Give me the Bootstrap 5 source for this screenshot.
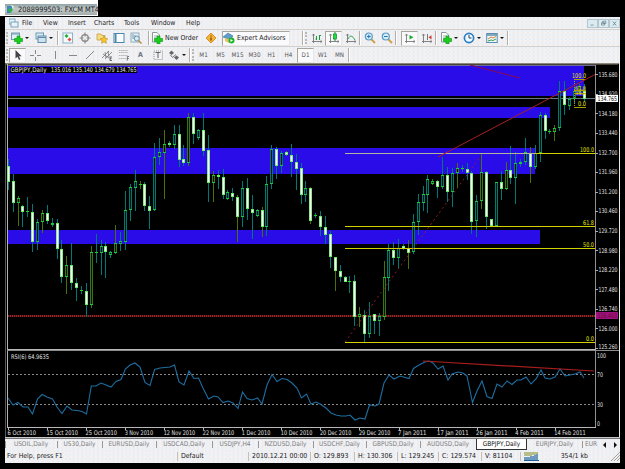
<!DOCTYPE html>
<html lang="en">
<head>
  <meta charset="UTF-8" />
  <meta name="viewport" content="width=device-width, initial-scale=1" />
  <title>2088999503: FXCM MT4</title>
  <link href="https://cdn.jsdelivr.net/npm/bootstrap@5.3.3/dist/css/bootstrap.min.css" rel="stylesheet" />
  <style>
    body {
      background: #000;
      font-family: "DejaVu Sans Condensed", "DejaVu Sans", sans-serif;
      font-size: 6.9px;
      line-height: 1;
      color: #1c1c1c;
      width: 625px;
      height: 469px;
    }
    .title-wrap { width: 98px; height: 16px; background: #fff; padding: 4px 1px 1px 5px; }
    .title-strip {
      height: 11px;
      background: linear-gradient(to bottom, #8fa3a6, #c4cbcb 45%, #a3abab);
      color: #222;
      font-size: 7.4px;
      white-space: nowrap;
    }
    .title-strip svg { width: 9px; height: 9px; margin: 0 3px 0 1px; flex: none; }
    .mt-window { width: 615px; margin: 1px 0 0 5px; }
    .dither {
      background-color: #f2f2f5;
      background-image: radial-gradient(circle at 1px 1px, #dbe8f2 .6px, transparent .8px), radial-gradient(circle at 3px 3px, #f1e3e1 .6px, transparent .8px);
      background-size: 4px 4px, 5px 4px;
    }
    .menu-row { height: 12px; }
    .menu-grid { display: grid; grid-template-columns: 17px 21px 25px 26px 30px 27px 35px 20px; align-items: center; }
    .menu-row .mdi { width: 11px; height: 9px; background: #dcebf0; border: 1px solid #b4c6ce; }
    .tool-row { height: 17px; border-top: 1px solid #d2d0cc; }
    .tool { flex: 0 0 17px; width: 17px; height: 15px; display: flex; align-items: center; justify-content: center; }
    .tool.w16 { flex-basis: 16px; width: 16px; }
    .tool svg, .btn-mt svg { width: 12px; height: 12px; flex: none; }
    .pressed { background: #fafafc; border: 1px solid; border-color: #aaa59b #e8e8e8 #e8e8e8 #aaa59b; }
    .drop { flex: 0 0 8px; }
    .drop::before { content: ""; display: block; width: 0; border: 2px solid transparent; border-top-color: #111; border-bottom: 0; }
    .drop.short { flex-basis: 7px; }
    .rule { flex: 0 0 2px; height: 14px; border-left: 1px solid #b2aea4; border-right: 1px solid #fff; }
    .rule.after-experts { margin-left: 12px; }
    .grip { flex: 0 0 3px; height: 12px; margin-left: 1px; border-left: 2px dotted #b9b9b9; }
    .btn-mt { display: flex; align-items: center; gap: 2px; white-space: nowrap; height: 15px; }
    .new-order { width: 53px; padding-left: 1px; }
    .experts { width: 68px; margin-left: 3px; gap: 2px; }
    .tf { font-size: 6.3px; color: #555; }
    .chart-box { background: #000; height: 375px; }
    .chart-box svg { display: block; width: 615px; height: 375px; }
    .chart-box text { font-size: 6.4px; fill: #e0e0e0; }
    .chart-box .fib { fill: #e6e600; font-size: 6.5px; }
    .chart-box .fib-tiny { fill: #e6e600; font-size: 5.2px; }
    .chart-box .on-white { fill: #111; }
    .chart-box .on-magenta { fill: #60102c; }
    .tab-row {
      height: 12px;
      display: grid;
      grid-template-columns: 52px 45px 54px 56px 46px 55px 53px 54px 56px 51px 55px 18px 10px 10px;
      font-size: 6.5px;
      color: #808080;
      border-top: 1px solid #777;
    }
    .tab-row > div { display: flex; align-items: center; justify-content: center; white-space: nowrap; position: relative; }
    .tab-row > .tick::before { content: ""; position: absolute; left: 0; top: 2px; height: 7px; border-left: 1px solid #999; }
    .tab-row > .current { background: #fff; color: #111; border: 1px solid #333; border-top: 0; height: 11px; }
    .status-row {
      height: 13px;
      display: grid;
      grid-template-columns: 172px 71px 62px 44px 43px 41px 43px 39px 29px 56px 15px;
      align-items: center;
      white-space: nowrap;
    }
    .status-row > div { padding-left: 3px; height: 9px; line-height: 9px; }
    .status-row > .help-text { padding-left: 2px; }
    .status-row > .cell { border-left: 1px solid #c3c0b8; }
    .status-row > .traffic { padding-right: 17px; }
  </style>
</head>
<body>

<!-- icon set -->
<svg class="d-none">
  <symbol id="plus" viewBox="0 0 12 12"><path d="M6 4h3v2.500h2.500v3H9V12H6V9.500H3.500v-3H6z" fill="#18d018" stroke="#089018" stroke-width=".6"/></symbol>
  <symbol id="newChart" viewBox="0 0 12 12"><rect x=".5" y="1" width="8" height="6.500" fill="#e2eff5" stroke="#6f9aaf"/><path d="M.5 2h8" stroke="#6f9aaf"/><use href="#plus" width="12" height="12"/></symbol>
  <symbol id="profiles" viewBox="0 0 12 12"><rect x="1" y="1" width="7.500" height="6" fill="#dcecf4" stroke="#6b97b0"/><rect x="3" y="4" width="8" height="6.500" fill="#cfe3ef" stroke="#5f8ca8"/><path d="M3 5.500h8" stroke="#5f8ca8"/></symbol>
  <symbol id="market" viewBox="0 0 12 12"><rect x="1" y="1" width="9.500" height="10" fill="#f4fbff" stroke="#8cb2c6"/><path d="M2.500 4l2-2 2 2-2 2z" fill="#1cae34"/><path d="M5.500 7.500l2-2 2 2-2 2z" fill="#e0503c"/></symbol>
  <symbol id="target" viewBox="0 0 12 12"><circle cx="6" cy="6" r="3.300" fill="#eee" stroke="#888" stroke-width="1.300"/><path d="M6 .5v4M6 7.500v4M.5 6h4M7.500 6h4" stroke="#888" stroke-width="1.200"/></symbol>
  <symbol id="navigator" viewBox="0 0 12 12"><path d="M1 2h4l1 1.500h3V8H1z" fill="#f5dc84" stroke="#c8a040" stroke-width=".8"/><path d="M8 4l1.200 2.400 2.600.4-1.900 1.800.5 2.700L8 10l-2.400 1.300.5-2.700-1.900-1.800 2.600-.4z" fill="#f6c62c" stroke="#b98b18" stroke-width=".6"/></symbol>
  <symbol id="terminal" viewBox="0 0 12 12"><rect x="1" y="1.500" width="10" height="9" fill="#fafdff" stroke="#4b86ad"/><path d="M2.700 2v8" stroke="#4b86ad" stroke-width="1.600"/></symbol>
  <symbol id="tester" viewBox="0 0 12 12"><rect x="1" y="1" width="8" height="9" fill="#e8f1f5" stroke="#8dabba"/><path d="M3 2v5M5 3v5" stroke="#6a9ab4"/><circle cx="6.800" cy="6.500" r="2.500" fill="#d5e9f2" stroke="#6d91a3"/><path d="M8.500 8.500l3 3" stroke="#b88c3c" stroke-width="1.500"/></symbol>
  <symbol id="order" viewBox="0 0 12 12"><path d="M1.500.5H6l2.500 2.500V10h-7z" fill="#fff" stroke="#8a9a9a"/><path d="M3 4h4M3 6h3" stroke="#9aa"/><use href="#plus" width="12" height="12"/></symbol>
  <symbol id="meta" viewBox="0 0 12 12"><path d="M6 1l5 5-5 5-5-5z" fill="#f3b336" stroke="#d8922a"/><path d="M6 3.500v1M6 5.500v3" stroke="#6b4206" stroke-width="1.200"/></symbol>
  <symbol id="expert" viewBox="0 0 12 12"><path d="M0 5l5-4 5 3-3 4z" fill="#5f9cc8" stroke="#35749e" stroke-width=".6"/><path d="M2 6v3l4 2V7z" fill="#e7c25e"/><circle cx="8.500" cy="8.500" r="3" fill="#1eb42e"/><path d="M7.500 7v3l2.500-1.500z" fill="#fff"/></symbol>
  <symbol id="axes" viewBox="0 0 12 12"><path d="M2.500 2v9M1 9.500h10M1.300 3.500l1.200-1.500 1.200 1.500M9.500 8.300L11 9.500l-1.500 1.200" fill="none" stroke="#777" stroke-width=".9"/></symbol>
  <symbol id="bars" viewBox="0 0 12 12"><use href="#axes" width="12" height="12"/><path d="M5.500 4v4M8.500 3v5M4.500 7h1M8.500 3.500h1.500" stroke="#1b9a3b"/></symbol>
  <symbol id="candles" viewBox="0 0 12 12"><use href="#axes" width="12" height="12"/><path d="M7 0v9" stroke="#128a28"/><rect x="5.500" y="2" width="3" height="5" fill="#1ee03c" stroke="#128a28" stroke-width=".7"/></symbol>
  <symbol id="lineChart" viewBox="0 0 12 12"><use href="#axes" width="12" height="12"/><path d="M3 7c2-4 4-4 7 1" fill="none" stroke="#33a056"/></symbol>
  <symbol id="lens" viewBox="0 0 12 12"><path d="M7 7l4 4" stroke="#d2a046" stroke-width="2"/><circle cx="4.800" cy="4.500" r="3.500" fill="#d3ecfa" stroke="#5c9bc4" stroke-width="1.200"/></symbol>
  <symbol id="zoomIn" viewBox="0 0 12 12"><use href="#lens" width="12" height="12"/><path d="M3 4.500h3.600M4.800 2.700v3.600" stroke="#2474a8"/></symbol>
  <symbol id="zoomOut" viewBox="0 0 12 12"><use href="#lens" width="12" height="12"/><path d="M3 4.500h3.600" stroke="#2474a8"/></symbol>
  <symbol id="scroll" viewBox="0 0 12 12"><use href="#axes" width="12" height="12"/><path d="M5.500 3l4 2.300-4 2.300z" fill="#16b02e"/></symbol>
  <symbol id="shift" viewBox="0 0 12 12"><use href="#axes" width="12" height="12"/><path d="M6.500 2v6" stroke="#777"/><path d="M10.500 3.200L7.500 5.300l3 2.100z" fill="#cc3c28"/></symbol>
  <symbol id="clock" viewBox="0 0 12 12"><circle cx="6" cy="6" r="4.600" fill="#eef8ff" stroke="#2f7cc0" stroke-width="1.700"/><path d="M6 3v3h2.500" fill="none" stroke="#345"/></symbol>
  <symbol id="template" viewBox="0 0 12 12"><rect x=".7" y="1.500" width="10.500" height="9" fill="#eef7fb" stroke="#5b8eae"/><path d="M1 3h10" stroke="#5b8eae" stroke-width="1.500"/><path d="M2 7l3-2 2 1 3-1.500" fill="none" stroke="#d4823c"/><path d="M2 9l3-1 2 .5 3-1.500" fill="none" stroke="#38a048"/></symbol>
  <symbol id="cursor" viewBox="0 0 12 12"><path d="M3.500 1v8.500l2-1.800L7 11l1.400-.7L7 7.200h2.700z" fill="#444"/></symbol>
  <symbol id="cross" viewBox="0 0 12 12"><path d="M6.500 1v4M6.500 8v4M1 6.500h4M8 6.500h4" stroke="#888"/></symbol>
  <symbol id="vline" viewBox="0 0 12 12"><path d="M5.500 2v8" stroke="#888"/></symbol>
  <symbol id="hline" viewBox="0 0 12 12"><path d="M2 6.500h8" stroke="#888"/></symbol>
  <symbol id="trend" viewBox="0 0 12 12"><path d="M2 10l8-8" stroke="#888"/></symbol>
  <symbol id="channel" viewBox="0 0 12 12"><path d="M1 9l7-7M4 10l7-7M2 5l6 4M4 3l1 6M7 2l1 6" stroke="#777" stroke-width=".8"/><path d="M11 8H9v3.500h2M9 9.700h1.500" fill="none" stroke="#444" stroke-width=".8"/></symbol>
  <symbol id="fibo" viewBox="0 0 12 12"><path d="M1 1.500h9M1 3.500h9M1 6.500h9M1 9.500h7" stroke="#aaa" stroke-dasharray="1.500 .6" stroke-width=".9"/><path d="M11 7.500H9.300v4M9.300 9.500h1.500" fill="none" stroke="#555" stroke-width=".8"/></symbol>
  <symbol id="label" viewBox="0 0 12 12"><rect x="2" y="2" width="8.500" height="8.500" fill="none" stroke="#999" stroke-dasharray="1 1"/><path d="M3.500 3.500h5M6 3.500V9" stroke="#666"/></symbol>
  <symbol id="arrows" viewBox="0 0 12 12"><path d="M1 4L3.500 1.500 6 4 3.500 6z" fill="#666"/><path d="M2.500 6l2 2.500L8 5.500" fill="none" stroke="#777"/><path d="M6 8.500L8.500 6.500 11 8.500 8.500 11z" fill="#666"/></symbol>
</svg>

<div class="title-wrap">
  <div class="title-strip d-flex align-items-center">
    <svg viewBox="0 0 9 9"><path d="M1 1h5v3H4v4H1z" fill="#3f86c0"/><path d="M3 3l4 1-2 4-3-2z" fill="#33b04a"/><path d="M5 0l3 1-1 3z" fill="#e8f2d0"/></svg>
    <span>2088999503: FXCM MT4</span>
  </div>
</div>

<div class="mt-window">
  <!-- Menu -->
  <div class="menu-row dither d-flex align-items-center justify-content-between">
    <div class="menu-grid">
      <svg viewBox="0 0 11 10" width="11" height="10" class="ms-1"><rect x="0" y="1" width="6" height="5" fill="#eaf4f8" stroke="#7aa6bb"/><rect x="2" y="4" width="7" height="5" fill="#eaf4f8" stroke="#7aa6bb"/></svg>
      <span>File</span><span>View</span><span>Insert</span><span>Charts</span><span>Tools</span><span>Window</span><span>Help</span>
    </div>
    <div class="d-flex">
      <svg class="mdi" viewBox="0 0 11 9"><path d="M3 6.500h4" stroke="#6b8794"/></svg>
      <svg class="mdi" viewBox="0 0 11 9"><path d="M4.500 1.500h4v3h-4zM3 3.500h4v3H3z" fill="none" stroke="#6b8794"/></svg>
      <svg class="mdi" viewBox="0 0 11 9"><path d="M3.500 2l4 5M7.500 2l-4 5" stroke="#6b8794" stroke-width="1.200"/></svg>
    </div>
  </div>

  <!-- Standard toolbar -->
  <div class="tool-row dither d-flex align-items-center">
    <div class="grip"></div>
    <div class="tool w16"><svg><use href="#newChart"/></svg></div><div class="drop"></div>
    <div class="tool w16"><svg><use href="#profiles"/></svg></div><div class="drop"></div>
    <div class="rule"></div>
    <div class="tool"><svg><use href="#market"/></svg></div>
    <div class="tool"><svg><use href="#target"/></svg></div>
    <div class="tool"><svg><use href="#navigator"/></svg></div>
    <div class="tool"><svg><use href="#terminal"/></svg></div>
    <div class="tool"><svg><use href="#tester"/></svg></div>
    <div class="rule ms-1"></div>
    <div class="btn-mt new-order"><svg><use href="#order"/></svg>New Order</div>
    <div class="tool w16"><svg><use href="#meta"/></svg></div>
    <div class="btn-mt experts pressed"><svg><use href="#expert"/></svg>Expert Advisors</div>
    <div class="rule after-experts"></div>
    <div class="grip"></div>
    <div class="tool"><svg><use href="#bars"/></svg></div>
    <div class="tool pressed"><svg><use href="#candles"/></svg></div>
    <div class="tool"><svg><use href="#lineChart"/></svg></div>
    <div class="rule"></div>
    <div class="tool"><svg><use href="#zoomIn"/></svg></div>
    <div class="tool"><svg><use href="#zoomOut"/></svg></div>
    <div class="rule me-1"></div>
    <div class="tool pressed"><svg><use href="#scroll"/></svg></div>
    <div class="tool"><svg><use href="#shift"/></svg></div>
    <div class="rule"></div>
    <div class="tool"><svg><use href="#order"/></svg></div><div class="drop short"></div>
    <div class="tool w16"><svg><use href="#clock"/></svg></div><div class="drop short"></div>
    <div class="tool w16"><svg><use href="#template"/></svg></div><div class="drop short"></div>
    <div class="rule"></div>
  </div>

  <!-- Line studies and timeframes -->
  <div class="tool-row dither d-flex align-items-center">
    <div class="grip"></div>
    <div class="tool pressed"><svg><use href="#cursor"/></svg></div>
    <div class="tool"><svg><use href="#cross"/></svg></div>
    <div class="rule invisible"></div><div class="rule invisible"></div>
    <div class="tool"><svg><use href="#vline"/></svg></div>
    <div class="tool"><svg><use href="#hline"/></svg></div>
    <div class="tool"><svg><use href="#trend"/></svg></div>
    <div class="tool"><svg><use href="#channel"/></svg></div>
    <div class="tool"><svg><use href="#fibo"/></svg></div>
    <div class="tool fw-bold text-secondary">A</div>
    <div class="tool"><svg><use href="#label"/></svg></div>
    <div class="tool w16"><svg><use href="#arrows"/></svg></div><div class="drop short"></div>
    <div class="rule"></div><div class="grip"></div>
    <div class="tool tf">M1</div><div class="tool tf">M5</div><div class="tool tf">M15</div><div class="tool tf">M30</div><div class="tool tf">H1</div><div class="tool tf">H4</div>
    <div class="tool tf pressed">D1</div><div class="tool tf">W1</div><div class="tool tf">MN</div>
    <div class="rule"></div>
  </div>

  <div class="chart-box">
    <svg id="chart" viewBox="5 63 615 375"></svg>
  </div>

  <!-- Chart tabs -->
  <div class="tab-row dither">
    <div class="tick">USOIL,Daily</div>
    <div class="tick">US30,Daily</div>
    <div class="tick">EURUSD,Daily</div>
    <div class="tick">USDCAD,Daily</div>
    <div class="tick">USDJPY,H4</div>
    <div class="tick">NZDUSD,Daily</div>
    <div class="tick">USDCHF,Daily</div>
    <div class="tick">GBPUSD,Daily</div>
    <div class="tick">AUDUSD,Daily</div>
    <div class="current">GBPJPY,Daily</div>
    <div>EURJPY,Daily</div>
    <div class="tick">EUR</div>
    <div><svg viewBox="0 0 4 6" width="4" height="6"><path d="M3 0v6L0 3z" fill="#111"/></svg></div>
    <div><svg viewBox="0 0 4 6" width="4" height="6"><path d="M1 0v6l3-3z" fill="#111"/></svg></div>
  </div>

  <!-- Status bar -->
  <div class="status-row dither">
    <div class="help-text">For Help, press F1</div>
    <div class="cell">Default</div>
    <div class="cell">2010.12.21 00:00</div>
    <div class="cell">O: 129.893</div>
    <div class="cell">H: 130.306</div>
    <div class="cell">L: 129.245</div>
    <div class="cell">C: 129.574</div>
    <div class="cell">V: 81104</div>
    <div class="cell"><svg class="d-block" viewBox="0 0 15 9" width="15" height="9"><path d="M1 0v4M3 0v4M5 0v4M7 0v4M9 0v3M11 0v3M13 0v2" stroke="#7d8b20"/><path d="M1 8V5M3 8V5M5 8V5M7 8V4M9 8V4M11 8V3M13 8V2M0 8.500h15" stroke="#1c5f9c" stroke-width="1.200"/></svg></div>
    <div class="text-end traffic">354/1 kb</div>
    <div class="p-0"><svg class="d-block ms-auto" viewBox="0 0 9 9" width="9" height="9"><path d="M0 9l9-9M3 9l6-6M6 9l3-3" stroke="#a5a198"/></svg></div>
  </div>
</div>

<script>
  const chart = document.getElementById("chart");
  let out = "";

  function rect(x, y, w, h, fill) {
    out += `<rect x="${x}" y="${y}" width="${w}" height="${h}" fill="${fill}"/>`;
  }
  function line(x1, y1, x2, y2, color, extra = "") {
    out += `<line x1="${x1}" y1="${y1}" x2="${x2}" y2="${y2}" stroke="${color}" ${extra}/>`;
  }
  function text(x, y, s, w, cls = "") {
    out += `<text x="${x}" y="${y}" textLength="${w}" lengthAdjust="spacingAndGlyphs" class="${cls}">${s}</text>`;
  }

  // window frame
  rect(5, 63, 615, 1, "#8a8680");
  rect(5, 64, 613, 1, "#4a453a");
  rect(5, 63, 1, 375, "#5a5a58");
  rect(7, 64, 1, 286, "#b4b4b4");
  rect(7, 351, 1, 77, "#b4b4b4");
  rect(619, 63, 1, 375, "#e8e8e8");
  rect(5, 437, 615, 1, "#c8c8c8");

  // supply and demand zones
  [[65, 96, 584], [107, 118, 550], [148, 174, 535], [230, 244, 540]].forEach(([top, bottom, right]) => {
    rect(8, top, right - 8, bottom - top, "#2a0ce8");
  });
  rect(8, 65, 587, 1, "#6c6c94");

  rect(8, 98, 587, 1, "#66788a");
  line(8, 316, 595, 316, "#4a1010", 'stroke-width="2"');
  line(8, 316, 595, 316, "#942828", 'stroke-width="2" stroke-dasharray="1 1"');

  // candles: high, low, body top, body bottom, filled
  const candles = [
    [159,190,166,182,1],[174,212,181,203,1],[196,226,198,203,0],[205,227,206,212,1],[197,217,211,212,0],[204,252,212,242,1],
    [219,250,222,242,0],[210,233,213,222,0],[205,224,213,221,1],[218,227,223,225,0],[219,259,223,249,1],[240,283,249,277,1],
    [256,294,265,277,0],[243,290,265,283,1],[278,301,283,288,1],[286,294,290,291,0],[283,317,291,305,1],[246,308,252,305,0],
    [234,263,252,253,0],[240,275,246,253,0],[242,278,246,252,1],[251,258,252,255,0],[225,254,243,253,0],[232,251,241,244,0],
    [191,250,210,242,0],[184,221,187,210,0],[170,211,181,188,0],[181,189,184,185,0],[182,211,184,206,1],[196,229,206,211,1],
    [143,211,157,210,0],[138,165,152,157,0],[130,199,144,153,0],[141,147,143,145,1],[125,149,134,145,0],[125,167,134,160,1],
    [145,166,159,163,1],[113,166,117,163,0],[113,144,117,134,1],[129,140,130,138,0],[113,156,130,151,1],[135,202,150,183,1],
    [171,202,175,183,0],[170,189,175,177,1],[169,199,177,195,1],[190,200,192,199,0],[188,201,193,197,1],[195,242,197,217,1],
    [181,227,188,217,0],[178,220,188,209,1],[195,239,209,213,1],[209,217,210,216,0],[207,237,210,227,1],[176,236,184,227,0],
    [145,189,149,184,0],[147,179,149,166,1],[151,173,153,166,0],[151,156,152,155,1],[144,177,155,162,1],[154,190,162,169,1],
    [163,204,168,195,1],[181,202,188,195,0],[187,224,188,221,1],[213,218,215,216,0],[211,236,216,227,1],[216,244,227,235,1],
    [231,268,234,257,1],[257,291,257,271,1],[265,282,271,277,1],[276,282,277,282,1],[276,293,281,282,0],[275,326,281,317,1],
    [307,327,314,317,0],[310,342,315,334,1],[302,338,316,334,0],[314,334,314,321,1],[313,336,316,321,0],[261,320,277,317,0],
    [244,291,250,278,0],[242,265,250,258,1],[239,268,248,258,0],[244,250,246,249,1],[240,269,248,253,1],[214,254,222,252,0],
    [194,235,202,222,0],[186,211,194,203,0],[175,213,179,195,0],[179,185,181,184,0],[180,198,181,187,1],[157,189,175,187,0],
    [167,202,175,192,1],[168,207,173,192,0],[163,188,168,173,0],[165,172,168,169,0],[163,180,169,173,1],[171,234,173,222,1],
    [195,237,201,221,0],[154,209,172,201,0],[171,229,172,217,1],[219,227,219,226,1],[182,226,182,226,0],[171,200,182,189,1],
    [162,190,170,189,0],[146,184,170,178,1],[152,204,163,178,0],[159,167,162,164,0],[138,165,152,162,0],[147,183,153,167,1],
    [145,169,153,167,0],[112,162,115,153,0],[113,139,115,131,1],[129,134,131,132,0],[125,141,128,132,0],[81,131,91,128,0],
    [81,115,91,105,1],[97,110,99,106,0],[88,104,91,99,0],[84,93,86,92,0],[84,102,91,99,1]
  ];
  candles.forEach(([high, low, top, bottom, filled], i) => {
    const x = Math.round(7.8 + 4.88 * i);
    const h = Math.max(bottom - top, 1);
    rect(x, high, 1, low - high, i % 5 === 2 ? "#4c7008" : "#007878");
    if (filled) {
      rect(x - 1, top, 3, h, "#f4fff4");
      rect(x - 1, top, .5, h, "#30d030");
      rect(x + 1.5, top, .5, h, "#30d030");
      rect(x - 1, top, 3, 1, "#60f060");
      rect(x - 1, bottom - 1, 3, 1, "#60f060");
    } else if (h < 2) {
      rect(x - 1, top, 3, 1, "#18d818");
    } else {
      rect(x - 1, top, 3, h, i % 5 === 2 ? "#3c7410" : "#00786c");
      rect(x, top + 1, 1, h - 2, "#001410");
      rect(x - 1, top, 3, 1, "#18c83c");
      rect(x - 1, bottom - 1, 3, 1, "#18c83c");
    }
  });

  // fibonacci levels
  rect(345, 153, 190, 1, "#b4b49c");
  rect(535, 153, 60, 1, "#d2d200");
  rect(345, 226, 250, 1, "#d2d200");
  rect(345, 248, 250, 1, "#d2d200");
  rect(345, 342, 250, 1, "#d2d200");
  text(580, 152, "100.0", 14, "fib");
  text(583, 225, "61.8", 11, "fib");
  text(583, 247, "50.0", 11, "fib");
  text(586, 341, "0.0", 8, "fib");
  [79, 90, 93, 107].forEach(y => rect(574, y, 12, 1, "#a8a000"));
  line(574.5, 79, 574.5, 107, "#a8a000", 'stroke-dasharray="1 1"');
  text(572, 78, "100.0", 14, "fib");
  text(575, 89.5, "61.8", 11, "fib-tiny");
  text(575, 95, "38.2", 11, "fib-tiny");
  text(578, 106, "0.0", 8, "fib");

  // trend lines
  line(345, 342, 480, 157, "#a02020", 'stroke-dasharray="2 3" stroke-width=".9"');
  line(438, 157, 595, 74.5, "#a82020");
  line(470, 65, 520, 78, "#8c0a50");

  // price axis
  rect(595, 65, 1, 363, "#909090");
  const prices = ["135.680", "134.920", "134.180", "133.440", "132.700", "131.960", "131.200", "130.460",
    "129.720", "128.980", "128.220", "127.480", "126.740", "126.000", "125.260"];
  prices.forEach((p, k) => {
    const y = 74.3 + 19.55 * k;
    rect(595, Math.round(y), 3, 1, "#aaa");
    text(598.5, Math.min(y + 2.3, 349), p, 19);
  });
  rect(596, 95, 22, 7, "#fff");
  text(597.5, 100.8, "134.765", 19.5, "on-white");
  rect(596, 312, 22, 7, "#a01080");
  text(597.5, 317.8, "126.493", 19.5, "on-magenta");

  rect(10, 67, 127, 6, "#000");
  text(10.5, 72.3, "GBPJPY,Daily", 36);
  text(51, 72.3, "135.016 135.140 134.679 134.765", 85.5);

  // rsi pane
  rect(7, 349, 589, 1, "#b8b8b8");
  rect(7, 350, 612, 1, "#8c8c8c");
  rect(7, 427, 589, 1, "#b8b8b8");
  line(8, 374.5, 595, 374.5, "#8a8a8a", 'stroke-dasharray="2 2"');
  line(8, 404.5, 595, 404.5, "#8a8a8a", 'stroke-dasharray="2 2"');
  const rsi = [
    [8,398],[13,405],[18,402.5],[23,407],[28,407],[32.5,414],[37.5,399],[42,394.5],[47,397],[52.5,399],[57,407],[62,413.5],[67,406],
    [72,410],[77,410.5],[82,411.5],[86.5,414],[91.3,386],[96,386],[101,383],[106,385],[111,387],[116,381.5],[121,379.5],[125.4,369],
    [130,365],[135,363],[140,367],[145,382.5],[150,385.5],[154.6,369.5],[160,368],[165,367.5],[170,367],[174.5,365],[179,382],[184,385],
    [189,371],[194,378.5],[198.5,378],[203,388],[208.5,399],[214,396],[218,397],[223,402.5],[228,401],[233,403],[238,408.5],[242.5,392],
    [247,398.5],[252,400],[257.5,398],[262,404],[267,385],[272,374.5],[277,381.5],[282,378.5],[287,379.5],[292,383],[297,388],[301.5,398],
    [306.5,394],[311,404],[316,402],[321,404.5],[326,408],[331,413],[336,415],[341,416],[346,416],[350,415],[355,420],[360,418],[365,419],
    [369.5,405],[375,406],[379,404],[384,383],[389,375],[394,379],[400,376],[409,378.5],[413.5,368.5],[419,365],[425,362],[429,361],
    [433,363],[438,369],[443,366],[448,380],[452,374],[458,372],[463,373],[467,376],[472.5,402.5],[477,391],[482,381],[487,396.5],
    [492,398.5],[497,384],[502,387],[507,381],[512,384.5],[517,380],[521,380],[526,377],[531,384],[536,379],[541,370],[545,378],[550,379],
    [555,377],[560,369],[565,376],[570,375],[575,374],[580,372],[584,378]
  ];
  out += `<polyline points="${rsi.join(" ")}" fill="none" stroke="#1d6ea0" stroke-width="1.1"/>`;
  line(423, 361, 594, 371, "#a81e1e", 'stroke-width="1.2"');
  text(11, 359, "RSI(6) 64.9635", 38);
  text(597, 357.8, "100", 9);
  text(597, 376.5, "70", 6);
  text(597, 406.8, "30", 6);
  text(597, 425.5, "0", 3);

  // time axis
  const dates = ["6 Oct 2010", "15 Oct 2010", "25 Oct 2010", "3 Nov 2010", "12 Nov 2010", "22 Nov 2010", "1 Dec 2010", "10 Dec 2010",
    "20 Dec 2010", "29 Dec 2010", "7 Jan 2011", "17 Jan 2011", "26 Jan 2011", "4 Feb 2011", "14 Feb 2011"];
  dates.forEach((d, i) => {
    const x = 8 + 39.05 * i;
    rect(Math.round(x), 427, 1, 3, "#b8b8b8");
    text(x - .5, 435, d, d.length > 10 ? 31.5 : 28.5);
  });

  chart.innerHTML = out;
</script>

<script src="https://cdn.jsdelivr.net/npm/bootstrap@5.3.3/dist/js/bootstrap.bundle.min.js"></script>
</body>
</html>
